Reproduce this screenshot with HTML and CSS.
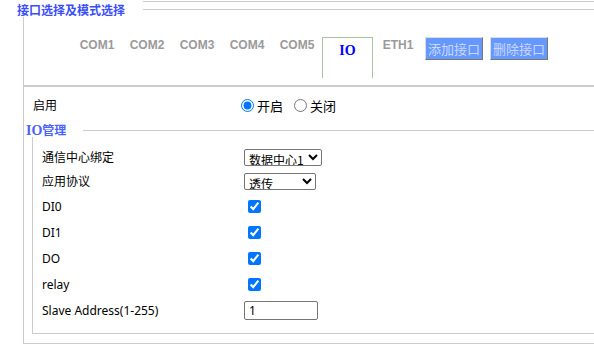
FILE: index.html
```html
<!DOCTYPE html>
<html lang="zh-CN">
<head>
    <meta charset="UTF-8">
    <meta name="viewport" content="width=device-width, initial-scale=1.0">
    <title>接口设置</title>
    <link rel="stylesheet" href="styles.css">
</head>
<body>

    <div class="topline"></div>

    <div class="group outer">
        <div class="legend-row">
            <span class="legend">接口选择及模式选择</span>
            <span class="rule"></span>
        </div>
        <div class="group-box outer-box">
            <ul class="tabs">
                <li class="tab">COM1</li>
                <li class="tab">COM2</li>
                <li class="tab">COM3</li>
                <li class="tab">COM4</li>
                <li class="tab">COM5</li>
                <li class="tab active">IO</li>
                <li class="tab">ETH1</li>
                <li class="tab-action"><button class="tab-btn">添加接口</button></li>
                <li class="tab-action"><button class="tab-btn">删除接口</button></li>
            </ul>

            <div class="form-row enable-row">
                <span class="label">启用</span>
                <span class="field">
                    <label class="choice"><input type="radio" name="enable" checked>开启</label>
                    <label class="choice"><input type="radio" name="enable">关闭</label>
                </span>
            </div>

            <div class="group inner">
                <div class="legend-row">
                    <span class="legend io-legend"><b>IO</b>管理</span>
                    <span class="rule"></span>
                </div>
                <div class="group-box inner-box">
                    <div class="form-row short">
                        <span class="label">通信中心绑定</span>
                        <select class="sel-center">
                            <option>数据中心1</option>
                            <option>数据中心2</option>
                        </select>
                    </div>
                    <div class="form-row short">
                        <span class="label">应用协议</span>
                        <select class="sel-proto">
                            <option>透传</option>
                            <option>Modbus</option>
                        </select>
                    </div>
                    <div class="form-row">
                        <span class="label">DI0</span>
                        <input type="checkbox" checked>
                    </div>
                    <div class="form-row">
                        <span class="label">DI1</span>
                        <input type="checkbox" checked>
                    </div>
                    <div class="form-row">
                        <span class="label">DO</span>
                        <input type="checkbox" checked>
                    </div>
                    <div class="form-row">
                        <span class="label">relay</span>
                        <input type="checkbox" checked>
                    </div>
                    <div class="form-row">
                        <span class="label">Slave Address(1-255)</span>
                        <input type="text" class="text-input" value="1">
                    </div>
                </div>
            </div>
        </div>
    </div>

</body>
</html>
```

FILE: styles.css
```css
body {
    margin: 0;
    padding-top: 1px;
    font-family: "Noto Sans", "Noto Sans CJK SC", sans-serif;
    font-size: 12px;
    color: #000;
    background: #fff;
    overflow: hidden;
}
.topline {
    margin-left: 143px;
    border-top: 1px solid #ccc;
}
.group {
    padding-left: 17px;
}
.inner {
    padding-left: 2px;
}
.legend-row {
    display: flex;
    align-items: center;
    height: 15px;
}
.inner .legend-row {
    height: 14px;
}
.legend {
    color: #3b4eff;
    font-weight: bold;
    font-family: "Noto Sans CJK SC", sans-serif;
    line-height: 15px;
}
.io-legend {
    color: #4a62ff;
}
.io-legend b {
    font-family: "Liberation Serif", "Times New Roman", serif;
    font-size: 14px;
}
.rule {
    flex: 1;
    border-top: 1px solid #ccc;
    margin-left: 18px;
}
.inner .rule {
    margin-left: 17px;
}
.group-box {
    margin-left: 6px;
    border-left: 1px solid #ccc;
    border-bottom: 1px solid #ccc;
}
.outer-box {
    padding-bottom: 9px;
}
.inner-box {
    padding: 8px 0 10px 9px;
}

/* tabs */
.tabs {
    list-style: none;
    margin: 0;
    padding: 20px 0 7px 48px;
    display: flex;
    align-items: flex-start;
    border-bottom: 2px solid #ccc;
}
.tab {
    width: 50px;
    height: 41px;
    box-sizing: border-box;
    padding-top: 1px;
    text-align: center;
    font-family: "Liberation Sans", Arial, sans-serif;
    font-weight: bold;
    color: #9a9a9a;
    line-height: 14px;
}
.tab.active {
    width: 51px;
    padding-top: 6px;
    border: 1px solid #abc2a5;
    border-bottom: none;
    font-family: "Liberation Serif", "Times New Roman", serif;
    font-size: 14px;
    color: #0000ff;
}
.tab-action {
    margin-left: 2px;
}
.tab-action + .tab-action {
    margin-left: 7px;
}
.tab-btn {
    width: 58px;
    height: 23px;
    padding: 0;
    background-color: #6699ff;
    color: #ccd6ff;
    border: 1px solid;
    border-color: #ddd #777 #777 #ddd;
    font-family: "Noto Sans CJK SC", sans-serif;
    font-size: 13px;
}

/* form rows */
.form-row {
    display: flex;
    align-items: center;
    height: 26px;
}
.form-row.short {
    height: 24px;
}
.label {
    width: 202px;
}
.enable-row {
    height: 36px;
    padding-left: 9px;
}
.enable-row .label {
    width: 203px;
}
.field {
    display: flex;
    align-items: center;
    font-size: 13px;
}
.choice {
    display: flex;
    align-items: center;
    margin-right: 6px;
}
.choice input {
    margin: 0 3px 0 5px;
}
select {
    height: 17px;
    padding: 0;
    border: 1px solid #767676;
    border-radius: 2px;
    background: #fff;
    font-family: "Noto Sans CJK SC", sans-serif;
    font-size: 12px;
    color: #000;
}
.sel-center { width: 78px; }
.sel-proto { width: 72px; }
input[type="checkbox"] {
    margin: 0 0 0 4px;
}
.text-input {
    width: 74px;
    height: 19px;
    box-sizing: border-box;
    padding: 0 4px;
    border: 1px solid #767676;
    border-radius: 2px;
    font-family: "Noto Sans", sans-serif;
    font-size: 12px;
}
```
